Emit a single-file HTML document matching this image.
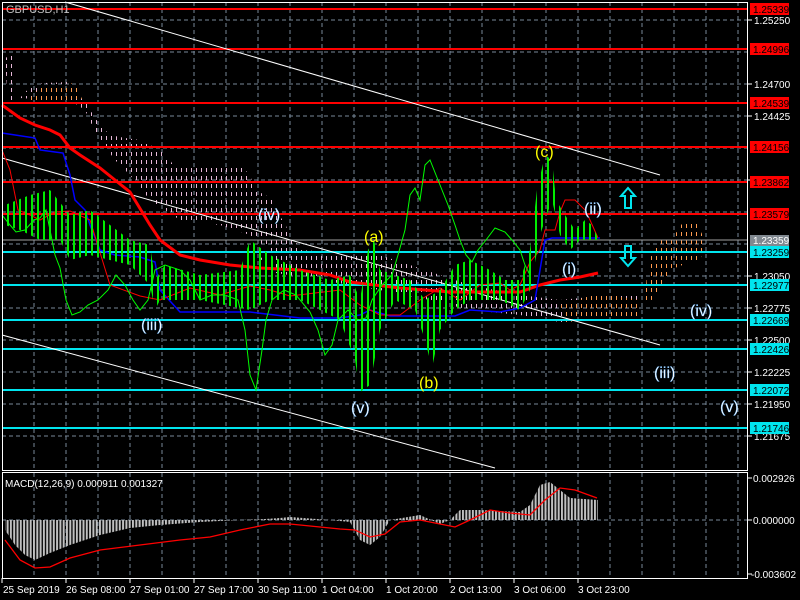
<!DOCTYPE html>
<html><head><meta charset="utf-8"><style>
html,body{margin:0;padding:0;background:#000;width:800px;height:600px;overflow:hidden}
svg{display:block;font-family:"Liberation Sans",sans-serif}
</style></head><body>
<svg width="800" height="600" viewBox="0 0 800 600" xmlns="http://www.w3.org/2000/svg">
<defs>
<pattern id="cg" width="6" height="10" patternUnits="userSpaceOnUse"><rect x="1" y="0" width="2" height="10" fill="#00ee00"/></pattern>
<pattern id="hg" width="3.3" height="10" patternUnits="userSpaceOnUse"><rect x="0" y="0" width="2" height="10" fill="#c0c0c0"/></pattern>
<pattern id="co" width="5" height="8" patternUnits="userSpaceOnUse"><rect x="1" y="0" width="1" height="4" fill="#ff9a50"/></pattern>
<pattern id="cp" width="5" height="8" patternUnits="userSpaceOnUse"><rect x="1" y="0" width="1" height="4" fill="#e8b8d8"/></pattern>
</defs>
<rect width="800" height="600" fill="#000"/>
<g stroke="#778899" stroke-width="1" stroke-dasharray="4,3" fill="none">
<path d="M34 2V470M66 2V470M98 2V470M130 2V470M162 2V470M194 2V470M226 2V470M258 2V470M290 2V470M322 2V470M354 2V470M386 2V470M418 2V470M450 2V470M482 2V470M514 2V470M546 2V470M578 2V470M610 2V470M642 2V470M674 2V470M706 2V470M738 2V470"/>
<path d="M2 20H747M2 52H747M2 84H747M2 116H747M2 148H747M2 180H747M2 212H747M2 244H747M2 276H747M2 308H747M2 340H747M2 372H747M2 404H747M2 436H747"/>
<path d="M34 473V578M66 473V578M98 473V578M130 473V578M162 473V578M194 473V578M226 473V578M258 473V578M290 473V578M322 473V578M354 473V578M386 473V578M418 473V578M450 473V578M482 473V578M514 473V578M546 473V578M578 473V578M610 473V578M642 473V578M674 473V578M706 473V578M738 473V578"/>
<path d="M2 520H747"/>
</g>
<polygon points="5,58 12,55 16,100 8,103" fill="url(#cp)"/>
<polygon points="20,98 32,85 45,83 70,82 75,95 85,100 90,110 100,125 110,135 125,138 140,140 160,150 170,160 175,168 200,165 240,165 250,175 255,190 265,195 275,200 278,215 285,222 290,240 300,245 300,262 290,262 270,250 250,235 220,225 180,220 150,200 130,175 115,160 100,140 92,125 85,110 70,100 50,100" fill="url(#cp)"/>
<polygon points="28,100 40,88 75,83 82,99 60,100" fill="url(#co)"/>
<polygon points="260,258 300,250 380,255 410,265 440,275 470,285 520,295 560,300 600,296 640,295 640,318 600,320 560,322 520,315 470,310 430,300 380,290 320,280 270,272" fill="url(#cp)"/>
<polygon points="560,305 590,296 610,295 640,300 640,318 600,320 565,322" fill="url(#co)"/>
<polygon points="645,300 648,262 660,240 675,235 680,225 695,220 705,240 700,262 690,262 670,270 660,290 650,302" fill="url(#co)"/>
<g stroke="#ff0000" stroke-width="2">
<path d="M2 9H747M2 49H747M2 103H747M2 147H747M2 182H747M2 214H747"/>
</g>
<path d="M2 240H747" stroke="#a0a0a0" stroke-width="1"/>
<g stroke="#00e5ee" stroke-width="2">
<path d="M2 252H747M2 285H747M2 320H747M2 349H747M2 390H747M2 428H747"/>
</g>
<g stroke="#fff" stroke-width="1" fill="none">
<path d="M65 2L660 175"/><path d="M2 158L660 345"/><path d="M2 335L495 468"/>
</g>
<path d="M2 105L20 118L35 125L50 130L60 135L70 148L80 155L100 168L115 180L130 192L150 225L160 240L180 255L200 260L230 265L260 268L300 270L330 275L350 282L400 288L450 292L520 292L540 285L560 280L580 277L598 273" stroke="#ff0000" stroke-width="3" fill="none"/>
<path d="M2 133L35 138L40 150L55 152L63 153L70 175L75 200L85 210L90 225L100 250L115 255L140 257L155 262L160 290L180 312L250 312L300 318L340 318L360 315L370 310L390 316L455 316L470 310L500 312L510 310L520 308L535 300L545 240L552 238L600 238" stroke="#0000ff" stroke-width="1.5" fill="none"/>
<path d="M2 150L10 170L18 210L30 215L40 220L55 212L70 211L90 220L110 285L140 296L160 300L190 288L220 295L250 286L270 290L290 296L340 290L360 305L380 315L400 315L420 300L440 288L460 300L480 285L500 283L510 290L520 285L530 262L540 250L545 230L555 230L560 212L565 200L575 200L585 210L590 220L598 238" stroke="#ff0000" stroke-width="1" fill="none"/>
<path d="M2 215L10 225L16 232L25 230L34 220L40 218L46 210L55 255L60 268L66 300L72 315L80 312L88 305L98 300L108 290L116 275L125 285L133 300L140 310L148 300L155 270L165 265L180 270L190 280L200 300L212 295L225 295L238 300L245 330L250 375L256 390L262 350L266 320L272 300L284 290L296 295L310 312L318 330L325 355L332 345L338 320L348 310L358 320L366 318L372 300L382 285L392 275L398 255L405 230L410 195L415 188L420 200L425 165L430 160L436 175L442 190L448 205L455 225L460 240L466 255L472 262L478 250L486 240L495 228L505 232L512 240L520 250L525 265L530 275" stroke="#00ff00" stroke-width="1" fill="none"/>
<polygon points="5,205 30,195 50,190 70,215 90,210 110,225 130,240 150,245 155,280 165,265 200,275 240,270 250,240 270,255 300,270 330,280 350,275 360,300 368,250 374,240 380,270 410,280 425,300 440,290 455,265 470,260 490,270 505,280 520,280 530,250 537,190 545,155 552,160 556,200 565,215 575,230 585,220 592,225 598,238 598,240 590,240 580,240 570,250 560,235 552,200 540,235 530,290 520,310 500,300 470,300 455,310 440,330 432,368 425,340 415,310 395,300 380,330 370,385 360,392 355,360 340,320 320,310 300,300 270,300 250,310 200,300 160,300 155,310 150,285 130,265 110,260 90,255 70,260 60,240 40,240 20,230 5,225" fill="url(#cg)"/>
<path d="M628 188L621 196H625V208H631V196H635Z" fill="none" stroke="#00e5ee" stroke-width="2"/>
<path d="M628 266L621 258H625V246H631V258H635Z" fill="none" stroke="#00e5ee" stroke-width="2"/>
<g font-size="16" fill="#fff" stroke="#4aa8ff" stroke-width="0.3">
<text x="258" y="220">(iv)</text>
<text x="141" y="330">(iii)</text>
<text x="351" y="413">(v)</text>
<text x="584" y="214">(ii)</text>
<text x="562" y="274">(i)</text>
<text x="690" y="316">(iv)</text>
<text x="654" y="378">(iii)</text>
<text x="720" y="412">(v)</text>
</g>
<g font-size="16" fill="#ffff00">
<text x="364" y="242">(a)</text>
<text x="419" y="388">(b)</text>
<text x="535" y="157">(c)</text>
</g>
<text x="6" y="13" font-size="11" fill="#c0c0c0">GBPUSD,H1</text>
<polygon points="5,520 5,530 15,545 25,555 35,560 50,553 70,545 100,535 130,528 160,525 200,522 240,520 265,519 280,518 290,517 330,520 350,522 360,540 370,545 380,537 390,520 420,515 440,524 450,520 460,510 480,510 520,512 530,505 540,485 550,482 560,490 570,498 598,500 598,520" fill="url(#hg)"/>
<path d="M5 540L20 560L35 568L50 567L70 558L100 550L140 545L180 540L210 537L240 530L270 524L290 524L310 526L340 529L355 530L370 537L385 534L400 522L420 520L440 524L455 527L470 520L490 510L510 513L530 515L545 500L560 488L575 490L597 498" stroke="#ff0000" stroke-width="1.3" fill="none"/>
<text x="5" y="487" font-size="10" fill="#fff">MACD(12,26,9) 0.000911 0.001327</text>
<g stroke="#fff" stroke-width="1" fill="none">
<path d="M2.5 2.5H747.5V470.5H2.5Z"/>
<path d="M2.5 472.5H747.5V578.5H2.5Z"/>
</g>
<g stroke="#fff" stroke-width="1">
<path d="M747 20h5M747 84h5M747 116h5M747 180h5M747 276h5M747 308h5M747 340h5M747 372h5M747 404h5M747 436h5M747 478h5M747 520h5M747 574h5"/>
<path d="M2 578v5M66 578v5M130 578v5M194 578v5M258 578v5M322 578v5M386 578v5M450 578v5M514 578v5M578 578v5"/>
</g>
<g font-size="10" fill="#fff">
<text x="754" y="24">1.25250</text>
<text x="754" y="88">1.24700</text>
<text x="754" y="120">1.24425</text>
<text x="754" y="280">1.23050</text>
<text x="754" y="312">1.22775</text>
<text x="754" y="344">1.22500</text>
<text x="754" y="376">1.22225</text>
<text x="754" y="408">1.21950</text>
<text x="754" y="440">1.21675</text>
<text x="753" y="482">0.002926</text>
<text x="753" y="524">0.000000</text>
<text x="751" y="578">-0.003602</text>
</g>
<g font-size="10">
<rect x="750" y="3" width="39" height="12" fill="#ff0000"/><text x="753" y="13" fill="#000">1.25339</text>
<rect x="750" y="43" width="39" height="12" fill="#ff0000"/><text x="753" y="53" fill="#000">1.24996</text>
<rect x="750" y="97" width="39" height="12" fill="#ff0000"/><text x="753" y="107" fill="#000">1.24539</text>
<rect x="750" y="141" width="39" height="12" fill="#ff0000"/><text x="753" y="151" fill="#000">1.24156</text>
<rect x="750" y="176" width="39" height="12" fill="#ff0000"/><text x="753" y="186" fill="#000">1.23862</text>
<rect x="750" y="208" width="39" height="12" fill="#ff0000"/><text x="753" y="218" fill="#000">1.23579</text>
<rect x="750" y="235" width="39" height="11" fill="#808890"/><text x="753" y="244" fill="#fff">1.23359</text>
<rect x="750" y="246" width="39" height="12" fill="#00e5ee"/><text x="753" y="256" fill="#000">1.23259</text>
<rect x="750" y="279" width="39" height="12" fill="#00e5ee"/><text x="753" y="289" fill="#000">1.22977</text>
<rect x="750" y="314" width="39" height="12" fill="#00e5ee"/><text x="753" y="324" fill="#000">1.22669</text>
<rect x="750" y="343" width="39" height="12" fill="#00e5ee"/><text x="753" y="353" fill="#000">1.22426</text>
<rect x="750" y="384" width="39" height="12" fill="#00e5ee"/><text x="753" y="394" fill="#000">1.22072</text>
<rect x="750" y="422" width="39" height="12" fill="#00e5ee"/><text x="753" y="432" fill="#000">1.21746</text>
</g>
<g font-size="10" fill="#fff">
<text x="3" y="593">25 Sep 2019</text>
<text x="66" y="593">26 Sep 08:00</text>
<text x="130" y="593">27 Sep 01:00</text>
<text x="194" y="593">27 Sep 17:00</text>
<text x="258" y="593">30 Sep 11:00</text>
<text x="322" y="593">1 Oct 04:00</text>
<text x="386" y="593">1 Oct 20:00</text>
<text x="450" y="593">2 Oct 13:00</text>
<text x="514" y="593">3 Oct 06:00</text>
<text x="578" y="593">3 Oct 23:00</text>
</g>
</svg>
</body></html>
